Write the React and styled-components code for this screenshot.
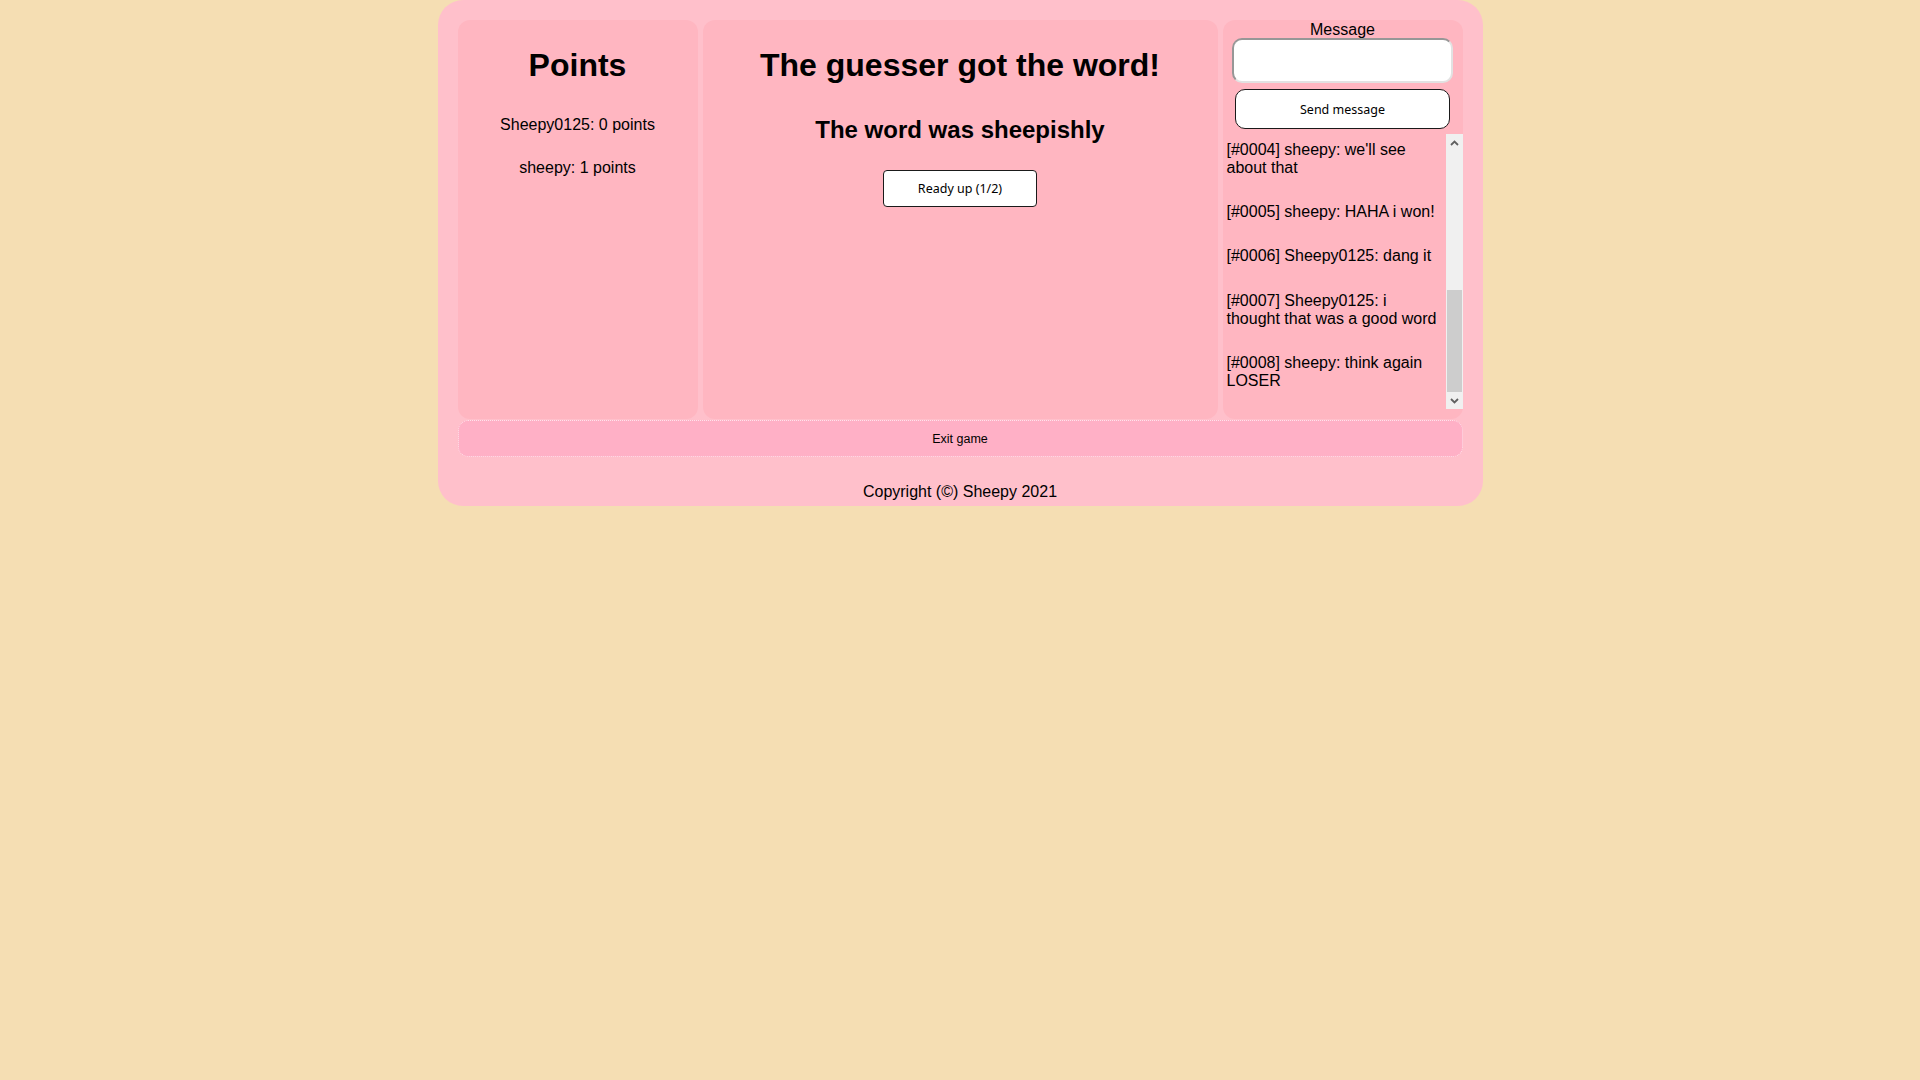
import styled, { createGlobalStyle } from "styled-components";

const GlobalStyle = createGlobalStyle`
    body {
        margin: 0;
        background-color: #f5deb3;
        font-family: "Liberation Sans", Arial, sans-serif;
        color: #000;
    }
`

const Game = styled.div`
    box-sizing: border-box;
    width: 1045px;
    margin: 0 auto;
    padding: 20px 20px 5px;
    background-color: #ffc0cb;
    border-radius: 25px;
`
const Board = styled.div`
    display: grid;
    grid-template-columns: 240px 1fr 240px;
    column-gap: 5px;
`
const Panel = styled.div`
    display: flex;
    flex-direction: column;
    align-items: center;
    background-color: #ffb6c1;
    border-radius: 12px;
    padding-bottom: ${p => p.pb ? p.pb : 0};
`
const Title = styled.h1`
    margin: 26.5px 0 0;
    font-size: 32px;
    font-weight: 700;
    line-height: normal;
`
const SubTitle = styled.h2`
    margin: 32px 0 0;
    font-size: 24px;
    font-weight: 700;
    line-height: normal;
`
const ScoreList = styled.div`
    display: flex;
    flex-direction: column;
    align-items: center;
    gap: 25.8px;
    margin-top: 32px;
`
const Line = styled.p`
    margin: 0;
    font-size: 16px;
    line-height: normal;
`
const Button = styled.button`
    box-sizing: border-box;
    font-family: "Noto Sans", "DejaVu Sans", sans-serif;
    font-size: 12.5px;
    color: #000;
    background-color: #fff;
    border: 1px solid #1a1a1a;
    border-radius: ${p => p.round ? '10px' : '4px'};
    width: ${p => p.width};
    height: ${p => p.height};
    margin-top: ${p => p.mt ? p.mt : 0};
    padding: 0;
    cursor: pointer;
`
const Label = styled.label`
    margin-top: 1px;
    font-size: 16px;
    line-height: normal;
`
const MessageInput = styled.input`
    box-sizing: border-box;
    width: 221px;
    height: 45px;
    margin-top: -1px;
    border-style: solid;
    border-width: 2px;
    border-color: #979797 #e2e2e2 #e2e2e2 #979797;
    border-radius: 10px;
    background-color: #fff;
    outline: none;
    padding: 0 8px;
    font-family: "Liberation Sans", Arial, sans-serif;
    font-size: 16px;
`
const ChatBox = styled.div`
    align-self: stretch;
    display: flex;
    height: 275px;
    margin-top: 5px;
`
const ChatLog = styled.div`
    flex: 1;
    min-width: 0;
    overflow: hidden;
    display: flex;
    flex-direction: column;
    gap: 26.2px;
    padding: 7px 4px 0 4px;
`
const ScrollBar = styled.div`
    width: 17px;
    display: flex;
    flex-direction: column;
    background-color: #f0f0f0;
`
const ScrollArrow = styled.div`
    height: 17px;
    display: flex;
    align-items: center;
    justify-content: center;
`
const ScrollTrack = styled.div`
    flex: 1;
    display: flex;
    flex-direction: column;
    justify-content: flex-end;
    padding: 0 1px;
`
const ScrollThumb = styled.div`
    height: 102px;
    background-color: #cdcdcd;
`
const ExitButton = styled.button`
    display: block;
    box-sizing: border-box;
    width: 100%;
    height: 37px;
    margin-top: 1px;
    background-color: #ffb0c6;
    border: 1px dotted #ffe4ec;
    border-radius: 10px;
    font-family: "Liberation Sans", Arial, sans-serif;
    font-size: 12.5px;
    color: #000;
    cursor: pointer;
`
const Copyright = styled.p`
    margin: 25.6px 0 0;
    text-align: center;
    font-size: 16px;
    line-height: normal;
`

const Chevron = ({ up }) => (
    <svg width="9" height="6" viewBox="0 0 9 6">
        <path d={up ? "M1 5 L4.5 1.5 L8 5" : "M1 1 L4.5 4.5 L8 1"} fill="none" stroke="#606060" strokeWidth="1.8" />
    </svg>
);

const scores = [
    { name: "Sheepy0125", points: 0 },
    { name: "sheepy", points: 1 },
];

const messages = [
    { id: "0004", user: "sheepy", text: "we'll see about that" },
    { id: "0005", user: "sheepy", text: "HAHA i won!" },
    { id: "0006", user: "Sheepy0125", text: "dang it" },
    { id: "0007", user: "Sheepy0125", text: "i thought that was a good word" },
    { id: "0008", user: "sheepy", text: "think again LOSER" },
];

const App = () => {
    return (
        <>
            <GlobalStyle />
            <Game>
                <Board>
                    <Panel>
                        <Title>Points</Title>
                        <ScoreList>
                            {scores.map(s => (
                                <Line key={s.name}>{s.name}: {s.points} points</Line>
                            ))}
                        </ScoreList>
                    </Panel>
                    <Panel>
                        <Title>The guesser got the word!</Title>
                        <SubTitle>The word was sheepishly</SubTitle>
                        <Button width="154px" height="37px" mt="26px">Ready up (1/2)</Button>
                    </Panel>
                    <Panel pb="10px">
                        <Label htmlFor="message">Message</Label>
                        <MessageInput id="message" type="text" />
                        <Button round width="215px" height="40px" mt="6px">Send message</Button>
                        <ChatBox>
                            <ChatLog>
                                {messages.map(m => (
                                    <Line key={m.id}>[#{m.id}] {m.user}: {m.text}</Line>
                                ))}
                            </ChatLog>
                            <ScrollBar>
                                <ScrollArrow><Chevron up /></ScrollArrow>
                                <ScrollTrack>
                                    <ScrollThumb />
                                </ScrollTrack>
                                <ScrollArrow><Chevron /></ScrollArrow>
                            </ScrollBar>
                        </ChatBox>
                    </Panel>
                </Board>
                <ExitButton>Exit game</ExitButton>
                <Copyright>Copyright (©) Sheepy 2021</Copyright>
            </Game>
        </>
    );
};

export default App;
